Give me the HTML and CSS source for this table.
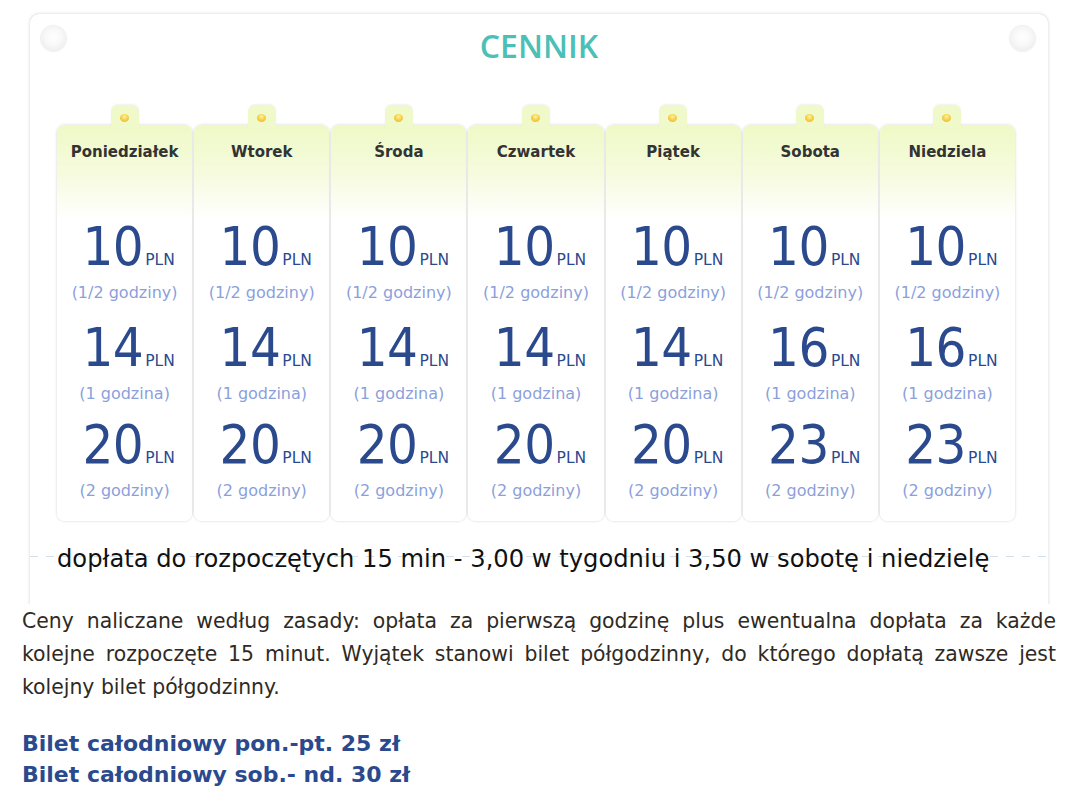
FILE: index.html
```html
<!DOCTYPE html>
<html lang="pl">
<head>
<meta charset="utf-8">
<title>Cennik</title>
<link rel="stylesheet" href="styles.css">
</head>
<body>
<div class="board-wrap">
  <div class="board">
    <span class="pin pin-left"></span>
    <span class="pin pin-right"></span>
    <h1 class="title">CENNIK</h1>
    <div class="days">
      <div class="day">
        <span class="tab"><span class="dot"></span></span>
        <h2 class="day-name">Poniedziałek</h2>
        <div class="price first"><span class="num">10</span><span class="cur">PLN</span></div>
        <div class="dur">(1/2 godziny)</div>
        <div class="price second"><span class="num">14</span><span class="cur">PLN</span></div>
        <div class="dur">(1 godzina)</div>
        <div class="price third"><span class="num">20</span><span class="cur">PLN</span></div>
        <div class="dur">(2 godziny)</div>
      </div>
      <div class="day">
        <span class="tab"><span class="dot"></span></span>
        <h2 class="day-name">Wtorek</h2>
        <div class="price first"><span class="num">10</span><span class="cur">PLN</span></div>
        <div class="dur">(1/2 godziny)</div>
        <div class="price second"><span class="num">14</span><span class="cur">PLN</span></div>
        <div class="dur">(1 godzina)</div>
        <div class="price third"><span class="num">20</span><span class="cur">PLN</span></div>
        <div class="dur">(2 godziny)</div>
      </div>
      <div class="day">
        <span class="tab"><span class="dot"></span></span>
        <h2 class="day-name">Środa</h2>
        <div class="price first"><span class="num">10</span><span class="cur">PLN</span></div>
        <div class="dur">(1/2 godziny)</div>
        <div class="price second"><span class="num">14</span><span class="cur">PLN</span></div>
        <div class="dur">(1 godzina)</div>
        <div class="price third"><span class="num">20</span><span class="cur">PLN</span></div>
        <div class="dur">(2 godziny)</div>
      </div>
      <div class="day">
        <span class="tab"><span class="dot"></span></span>
        <h2 class="day-name">Czwartek</h2>
        <div class="price first"><span class="num">10</span><span class="cur">PLN</span></div>
        <div class="dur">(1/2 godziny)</div>
        <div class="price second"><span class="num">14</span><span class="cur">PLN</span></div>
        <div class="dur">(1 godzina)</div>
        <div class="price third"><span class="num">20</span><span class="cur">PLN</span></div>
        <div class="dur">(2 godziny)</div>
      </div>
      <div class="day">
        <span class="tab"><span class="dot"></span></span>
        <h2 class="day-name">Piątek</h2>
        <div class="price first"><span class="num">10</span><span class="cur">PLN</span></div>
        <div class="dur">(1/2 godziny)</div>
        <div class="price second"><span class="num">14</span><span class="cur">PLN</span></div>
        <div class="dur">(1 godzina)</div>
        <div class="price third"><span class="num">20</span><span class="cur">PLN</span></div>
        <div class="dur">(2 godziny)</div>
      </div>
      <div class="day">
        <span class="tab"><span class="dot"></span></span>
        <h2 class="day-name">Sobota</h2>
        <div class="price first"><span class="num">10</span><span class="cur">PLN</span></div>
        <div class="dur">(1/2 godziny)</div>
        <div class="price second"><span class="num">16</span><span class="cur">PLN</span></div>
        <div class="dur">(1 godzina)</div>
        <div class="price third"><span class="num">23</span><span class="cur">PLN</span></div>
        <div class="dur">(2 godziny)</div>
      </div>
      <div class="day">
        <span class="tab"><span class="dot"></span></span>
        <h2 class="day-name">Niedziela</h2>
        <div class="price first"><span class="num">10</span><span class="cur">PLN</span></div>
        <div class="dur">(1/2 godziny)</div>
        <div class="price second"><span class="num">16</span><span class="cur">PLN</span></div>
        <div class="dur">(1 godzina)</div>
        <div class="price third"><span class="num">23</span><span class="cur">PLN</span></div>
        <div class="dur">(2 godziny)</div>
      </div>
    </div>
    <p class="extra">dopłata do rozpoczętych 15 min - 3,00 w tygodniu i 3,50 w sobotę i niedzielę</p>
  </div>
</div>
<p class="rules">Ceny naliczane według zasady: opłata za pierwszą godzinę plus ewentualna dopłata za każde kolejne rozpoczęte 15 minut. Wyjątek stanowi bilet półgodzinny, do którego dopłatą zawsze jest kolejny bilet półgodzinny.</p>
<p class="daily">Bilet całodniowy pon.-pt. 25 zł<br>Bilet całodniowy sob.- nd. 30 zł</p>
</body>
</html>
```

FILE: styles.css
```css
html, body {
  margin: 0;
  padding: 0;
  background: #fff;
}

body {
  font-family: "DejaVu Sans", Verdana, sans-serif;
  color: #333;
}

.board-wrap {
  box-sizing: border-box;
  height: 604px;
  padding: 14px 35px 0 30px;
  overflow: hidden;
}

.board {
  position: relative;
  height: 640px;
  background: #fff;
  border-radius: 9px 9px 0 0;
  box-shadow: 0 0 3px 1px rgba(0, 0, 0, 0.09), 0 0 1px rgba(0, 0, 0, 0.12);
}

.pin {
  position: absolute;
  top: 12px;
  width: 25px;
  height: 25px;
  border-radius: 50%;
  background: radial-gradient(circle at 50% 45%, #ffffff 0%, #f8f8f8 45%, #e6e6e6 100%);
  box-shadow: 0 0 1px 1px rgba(0, 0, 0, 0.07);
}

.pin-left { left: 11px; }
.pin-right { left: 980px; }

.title {
  margin: 0;
  padding-top: 13px;
  text-align: center;
  font-family: "Open Sans", sans-serif;
  font-weight: 600;
  font-size: 32px;
  line-height: 38px;
  color: #4cbfb7;
}

.days {
  display: grid;
  grid-template-columns: repeat(7, 1fr);
  gap: 2px;
  width: 958px;
  margin: 60px 0 0 27px;
}

.day {
  position: relative;
  height: 396px;
  border-radius: 8px;
  background: linear-gradient(to bottom, #eef9c6 0px, #f6fbdf 50px, #ffffff 95px);
  box-shadow: 0 0 2px 1px rgba(0, 0, 0, 0.09);
  text-align: center;
}

.tab {
  position: absolute;
  left: 50%;
  top: -20px;
  width: 28px;
  height: 24px;
  margin-left: -14px;
  border-radius: 7px 7px 0 0;
  background: #eff9c9;
  box-shadow: 0 -1px 2px rgba(0, 0, 0, 0.06);
}

.dot {
  position: absolute;
  left: 9px;
  top: 9px;
  width: 9px;
  height: 8px;
  border-radius: 50%;
  background: radial-gradient(circle at 50% 35%, #fff3a8 0%, #f7d24a 45%, #e9ad27 100%);
}

.day-name {
  position: relative;
  margin: 0;
  padding-top: 17px;
  font-size: 15px;
  line-height: 20px;
  font-weight: bold;
  color: #333;
}

.price {
  display: flex;
  justify-content: center;
  align-items: baseline;
  padding-left: 8px;
  color: #2b4a8e;
  height: 52px;
  line-height: 52px;
}

.price.first { margin-top: 59px; }
.price.second { margin-top: 18px; }
.price.third { margin-top: 14px; }

.num {
  font-family: "DejaVu Sans Condensed", "DejaVu Sans", sans-serif;
  font-stretch: condensed;
  font-size: 54px;
  letter-spacing: -0.5px;
}

.cur {
  font-size: 15.5px;
  margin-left: 2px;
}

.dur {
  font-size: 16px;
  line-height: 22px;
  color: #8b9fdc;
  margin-top: 9px;
}

.extra {
  margin: 23px 0 0 0;
  padding-left: 27px;
  font-size: 24.2px;
  line-height: 30px;
  color: #111;
  background: repeating-linear-gradient(to right, #d3e2ea 0 8px, transparent 8px 16px) 0 12px / 100% 1px no-repeat;
}

.rules {
  margin: 0 27px 0 22px;
  padding-top: 1px;
  font-size: 20.4px;
  line-height: 33px;
  text-align: justify;
  color: #2f2a24;
}

.daily {
  margin: 24px 0 0 22px;
  font-size: 22px;
  line-height: 31px;
  font-weight: bold;
  color: #2b4a8e;
}
```
